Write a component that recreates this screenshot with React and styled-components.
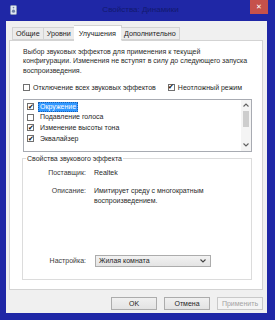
import React from 'react'
import styled, { createGlobalStyle } from 'styled-components'

const Global = createGlobalStyle`
  html, body { margin: 0; padding: 0; background: #1f27a6; }
  body { font-family: "Liberation Sans", Arial, sans-serif; font-size: 7px; color: #1e1e1e; }
`

const effects = [
  { name: 'Окружение', checked: true, selected: true },
  { name: 'Подавление голоса', checked: false },
  { name: 'Изменение высоты тона', checked: true },
  { name: 'Эквалайзер', checked: true },
]

const App = () => {
  return (
    <>
      <Global />
      <Window>
        <TitleBar>
          <AppIcon>
            <svg width="7" height="10" viewBox="0 0 7 10">
              <rect x="0.5" y="0.5" width="6" height="9" rx="1" fill="#dfe6f2" stroke="#8a96b8" />
              <circle cx="3.5" cy="6.2" r="1.6" fill="#6d7ea6" />
              <circle cx="3.5" cy="2.6" r="0.8" fill="#6d7ea6" />
            </svg>
          </AppIcon>
          <Title>Свойства: Динамики</Title>
          <CloseButton>✕</CloseButton>
        </TitleBar>

        <Dialog>
          <TabStrip>
            <Tab>Общие</Tab>
            <Tab>Уровни</Tab>
            <Tab $active>Улучшения</Tab>
            <Tab>Дополнительно</Tab>
          </TabStrip>

          <Panel>
            <Intro>
              Выбор звуковых эффектов для применения к текущей<br />
              конфигурации. Изменения не вступят в силу до следующего запуска<br />
              воспроизведения.
            </Intro>

            <OptionsRow>
              <CheckLabel>
                <Check />
                Отключение всех звуковых эффектов
              </CheckLabel>
              <CheckLabel>
                <Check $checked />
                Неотложный режим
              </CheckLabel>
            </OptionsRow>

            <ListBox>
              <ListItems>
                {effects.map((e) => (
                  <ListItem key={e.name}>
                    <Check $checked={e.checked} />
                    <ItemText $selected={e.selected}>{e.name}</ItemText>
                  </ListItem>
                ))}
              </ListItems>
              <ScrollBar>
                <ScrollArrow>
                  <svg width="6" height="4" viewBox="0 0 6 4"><path d="M0.5 3.5 L3 1 L5.5 3.5" fill="none" stroke="#606060" strokeWidth="1.1" /></svg>
                </ScrollArrow>
                <Thumb />
                <ScrollSpacer />
                <ScrollArrow>
                  <svg width="6" height="4" viewBox="0 0 6 4"><path d="M0.5 0.5 L3 3 L5.5 0.5" fill="none" stroke="#606060" strokeWidth="1.1" /></svg>
                </ScrollArrow>
              </ScrollBar>
            </ListBox>

            <GroupBox>
              <Legend>Свойства звукового эффекта</Legend>
              <GroupBody>
                <PropGrid>
                  <PropLabel>Поставщик:</PropLabel>
                  <PropValue>Realtek</PropValue>
                  <PropLabel>Описание:</PropLabel>
                  <PropValue>Имитирует среду с многократным<br />воспроизведением.</PropValue>
                </PropGrid>
                <SettingRow>
                  <PropLabel>Настройка:</PropLabel>
                  <Select>
                    <span>Жилая комната</span>
                    <svg width="6" height="4" viewBox="0 0 6 4"><path d="M0.5 0.5 L3 3 L5.5 0.5" fill="none" stroke="#444" strokeWidth="1.1" /></svg>
                  </Select>
                </SettingRow>
              </GroupBody>
            </GroupBox>
          </Panel>

          <ButtonRow>
            <Button>OK</Button>
            <Button>Отмена</Button>
            <Button disabled>Применить</Button>
          </ButtonRow>
        </Dialog>
      </Window>
    </>
  )
}

export default App

/* ---------------- window ---------------- */

const Window = styled.div`
  width: 275px;
  height: 320px;
  box-sizing: border-box;
  background: #1f27a6;
  padding: 0 8px 7px 6px;
  display: flex;
  flex-direction: column;
`

const TitleBar = styled.div`
  height: 21px;
  display: flex;
  align-items: flex-start;
`

const AppIcon = styled.div`
  margin: 5px 0 0 4px;
  display: flex;
`

const Title = styled.div`
  flex: 1;
  text-align: center;
  margin-top: 5px;
  font-size: 8px;
  color: #0e1458;
  opacity: 0.7;
  padding-left: 14px;
`

const CloseButton = styled.div`
  width: 18px;
  height: 14px;
  margin-right: -1px;
  background: #c6514b;
  color: #fff;
  font-size: 7px;
  display: flex;
  align-items: center;
  justify-content: center;
`

const Dialog = styled.div`
  flex: 1;
  background: #f0f0f0;
  display: flex;
  flex-direction: column;
  padding: 4px 4px 0 3px;
`

/* ---------------- tabs ---------------- */

const TabStrip = styled.div`
  display: flex;
  align-items: flex-end;
  padding-left: 3px;
  height: 15px;
  position: relative;
  z-index: 1;
`

const Tab = styled.div`
  height: ${(p) => (p.$active ? '16px' : '13px')};
  margin: ${(p) => (p.$active ? '0 -1px -1px' : '0')};
  padding: 0 ${(p) => (p.$active ? '5px' : '3px')};
  box-sizing: border-box;
  display: flex;
  align-items: center;
  background: ${(p) => (p.$active ? '#fff' : '#ececec')};
  border: 1px solid #d3d3d3;
  border-bottom: ${(p) => (p.$active ? '1px solid #fff' : '1px solid #d3d3d3')};
  & + & { border-left: none; }
  font-size: 7.2px;
`

const Panel = styled.div`
  height: 250px;
  background: #fff;
  border: 1px solid #d3d3d3;
  box-sizing: border-box;
  padding: 6px 10px 8px 13px;
  display: flex;
  flex-direction: column;
`

const Intro = styled.div`
  line-height: 9.3px;
  white-space: nowrap;
  color: #2a2a2a;
`

const OptionsRow = styled.div`
  display: flex;
  gap: 12px;
  margin-top: 9px;
`

const CheckLabel = styled.div`
  display: flex;
  align-items: center;
  gap: 3px;
  white-space: nowrap;
`

const Check = styled.span`
  width: 7px;
  height: 7px;
  box-sizing: border-box;
  border: 1px solid #707070;
  background: #fff;
  display: inline-flex;
  align-items: center;
  justify-content: center;
  flex-shrink: 0;
  &::after {
    content: ${(p) => (p.$checked ? '"✔"' : 'none')};
    font-size: 7px;
    line-height: 1;
    color: #111;
    margin-top: -1px;
  }
`

/* ---------------- list ---------------- */

const ListBox = styled.div`
  margin-top: 8px;
  height: 53px;
  width: 229px;
  box-sizing: border-box;
  border: 1px solid #a8abb2;
  display: flex;
`

const ListItems = styled.div`
  flex: 1;
  padding: 3px 2px 0 3px;
  display: flex;
  flex-direction: column;
  gap: 3.3px;
`

const ListItem = styled.div`
  display: flex;
  align-items: center;
  gap: 4px;
  height: 7.4px;
`

const ItemText = styled.span`
  display: inline-block;
  line-height: 8px;
  padding: 0 1px;
  background-color: ${(p) => (p.$selected ? '#3399ff' : 'transparent')};
  color: ${(p) => (p.$selected ? '#ffffff' : '#1e1e1e')};
  border: 1px dotted ${(p) => (p.$selected ? '#1a5fb0' : 'transparent')};
`

const ScrollBar = styled.div`
  width: 10px;
  display: flex;
  flex-direction: column;
  align-items: center;
  background: #f4f4f4;
  padding: 2px 0;
`

const ScrollArrow = styled.div`
  height: 7px;
  display: flex;
  align-items: center;
`

const Thumb = styled.div`
  width: 6px;
  height: 16px;
  background: #cdcdcd;
  margin-top: 2px;
`

const ScrollSpacer = styled.div`
  flex: 1;
`

/* ---------------- group ---------------- */

const GroupBox = styled.fieldset`
  margin: 3px 0 0 -1px;
  width: 230px;
  height: 125px;
  box-sizing: border-box;
  border: 1px solid #dcdcdc;
  padding: 0;
  min-width: 0;
`

const Legend = styled.legend`
  padding: 0 1px;
  margin-left: 3px;
  color: #2a2a2a;
`

const GroupBody = styled.div`
  height: 105px;
  display: flex;
  flex-direction: column;
  padding-top: 6px;
  box-sizing: border-box;
`

const PropGrid = styled.div`
  display: grid;
  grid-template-columns: 63px 1fr;
  column-gap: 8px;
  row-gap: 9px;
  line-height: 9.5px;
`

const PropLabel = styled.div`
  text-align: right;
  width: 63px;
  color: #3a3a3a;
`

const PropValue = styled.div`
  color: #2a2a2a;
  white-space: nowrap;
`

const SettingRow = styled.div`
  margin-top: auto;
  display: flex;
  align-items: center;
  gap: 9px;
`

const Select = styled.div`
  width: 116px;
  height: 12px;
  box-sizing: border-box;
  border: 1px solid #acacac;
  background: linear-gradient(#f2f2f2, #e4e4e4);
  display: flex;
  align-items: center;
  justify-content: space-between;
  padding: 0 4px 0 3px;
`

/* ---------------- buttons ---------------- */

const ButtonRow = styled.div`
  display: flex;
  justify-content: flex-end;
  gap: 7px;
  padding: 7px 0 0;
`

const Button = styled.button`
  width: 46px;
  height: 13px;
  padding: 0;
  font-family: "Liberation Sans", Arial, sans-serif;
  font-size: 7px;
  color: ${(p) => (p.disabled ? '#a3a3a3' : '#1e1e1e')};
  background: ${(p) => (p.disabled ? '#f4f4f4' : 'linear-gradient(#f0f0f0, #e3e3e3)')};
  border: 1px solid ${(p) => (p.disabled ? '#c9c9c9' : '#acacac')};
`
